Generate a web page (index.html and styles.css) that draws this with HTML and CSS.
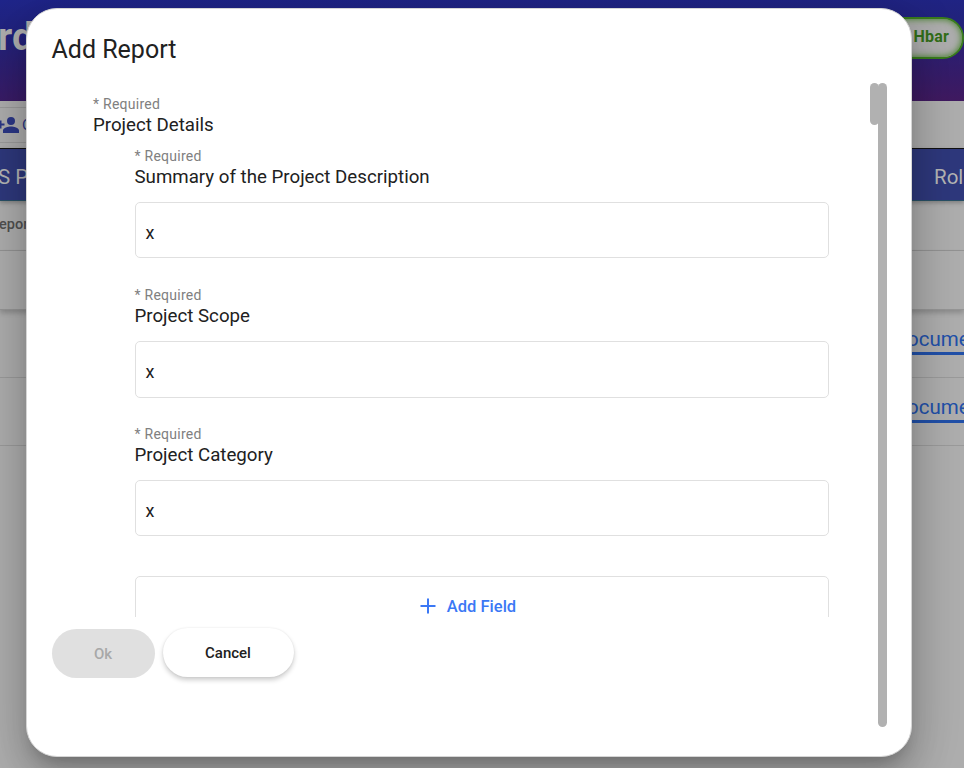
FILE: index.html
```html
<!DOCTYPE html>
<html lang="en">
<head>
<meta charset="utf-8">
<title>Add Report</title>
<link rel="stylesheet" href="styles.css">
</head>
<body>
<div class="page">
  <header class="topbar"><span class="brand">rd</span><span class="balance">Hbar</span></header>
  <div class="toolbar">
    <div class="tool">
      <svg class="person" width="26" height="24" viewBox="0 0 26 24"><path d="M16 12a4 4 0 1 0 0-8 4 4 0 0 0 0 8zM6.500 10.500V7.500H4.500v3h-3v2h3v3h2v-3h3v-2zM16 13.500c-2.700 0-8 1.300-8 4V20h16v-2.500c0-2.700-5.300-4-8-4z"/></svg>
      <span>O</span>
    </div>
  </div>
  <div class="row head"><span>S P</span><span class="end">Rol</span></div>
  <div class="row sub"><span>epor</span></div>
  <div class="row filter"></div>
  <div class="row link"><span></span><a class="doc">ocume</a></div>
  <div class="row link last"><span></span><a class="doc">ocume</a></div>
</div>
<div class="dialog">
  <h1>Add Report</h1>
  <div class="body">
    <div class="scroll">
      <div class="req">* Required</div>
      <div class="label">Project Details</div>
      <div class="group">
        <div class="field"><div class="req">* Required</div><div class="label">Summary of the Project Description</div><div class="input">x</div></div>
        <div class="field"><div class="req">* Required</div><div class="label">Project Scope</div><div class="input tall">x</div></div>
        <div class="field"><div class="req">* Required</div><div class="label">Project Category</div><div class="input">x</div></div>
        <div class="add"><svg width="16" height="16" viewBox="0 0 16 16"><path d="M8 .5v15M.5 8h15"/></svg><span>Add Field</span></div>
      </div>
    </div>
    <div class="thumb"></div>
  </div>
  <div class="actions"><button class="ok" disabled>Ok</button><button class="cancel">Cancel</button></div>
  <div class="bar"></div>
</div>
</body>
</html>
```
FILE: styles.css
```css
* { box-sizing: border-box; }
body { margin: 0; width: 964px; height: 768px; overflow: hidden; font-family: Roboto, sans-serif; color: #212121; position: relative; }
.page { height: 768px; background: #adadad; overflow: hidden; }
.topbar { height: 101px; display: flex; justify-content: space-between; align-items: flex-start; background: linear-gradient(179deg, #1f258a 0%, #21227c 30%, #371c68 80%, #401a60 100%); }
.brand { font-size: 39px; line-height: 46px; font-weight: 700; color: #adadad; margin: 14px 0 0 -2px; }
.balance { width: 120px; height: 42px; margin-top: 17px; border: 2px solid #397c1c; border-radius: 21px; background: #adadad; box-shadow: inset 0 0 7px #397c1c; color: #326e19; font-size: 16px; line-height: 36px; font-weight: 700; text-align: right; padding-right: 13px; letter-spacing: .2px; }
.toolbar { height: 47px; padding-top: 6px; }
.tool { width: 120px; height: 36px; border: 1px solid #9a9a9a; border-left: 0; display: flex; align-items: center; color: #2b3786; font-size: 15px; }
.person { fill: #2b3786; margin-left: -5px; flex: none; }
.tool span { margin-left: 1px; }
.row { display: grid; grid-template-columns: 934px 1fr; border-bottom: 1px solid #959595; white-space: nowrap; }
.head { height: 53px; border-top: 1px solid #111; border-bottom: 1px solid #285065; background: #2e387c; color: #b4b4b4; font-size: 20.500px; line-height: 56px; box-shadow: 0 2px 4px rgba(0,0,0,.25); }
.head span:first-child { margin-left: -2px; }
.sub { height: 50px; font-size: 14.500px; font-weight: 500; line-height: 48px; color: #505050; }
.sub span { margin-left: -1px; }
.filter { height: 59px; box-shadow: 0 3px 5px rgba(0,0,0,.2); }
.link { height: 68px; grid-template-columns: 907px 1fr; padding-top: 17px; border-bottom-color: #9a9a9a; }
.last { height: 68px; }
.doc { font-size: 20.500px; line-height: 25px; height: 28px; color: #2150a8; border-bottom: 3px solid #2150a8; }
.dialog { position: absolute; left: 26px; top: 8px; width: 886px; height: 749px; border-radius: 31px; background: #fff; border: 1px solid #d5d5d5; padding: 24px 0 0 24.500px; box-shadow: 0 11px 15px -7px rgba(0,0,0,.2), 0 24px 38px 3px rgba(0,0,0,.14), 0 9px 46px 8px rgba(0,0,0,.12); }
h1 { margin: 0 0 16px; font-size: 25px; line-height: 34px; font-weight: 400; }
.body { height: 534px; display: flex; justify-content: space-between; width: 827.500px; }
.scroll { height: 534px; overflow: hidden; padding: 12px 0 0 41.500px; width: 777px; }
.req { font-size: 14px; line-height: 18px; color: #808080; letter-spacing: .25px; }
.label { font-size: 18.700px; line-height: 24px; margin-bottom: 10px; }
.group { padding-left: 41.500px; }
.field { height: 139px; }
.field .label { margin-bottom: 13px; }
.input { height: 56px; border: 1px solid #e0e0e0; border-radius: 5px; padding: 10px; font-size: 18px; line-height: 40px; }
.tall { height: 57px; }
.add { height: 60px; margin-top: 12px; border: 1px solid #e0e0e0; border-radius: 5px; display: flex; justify-content: center; align-items: center; gap: 11px; color: #3b78f5; font-size: 16.500px; font-weight: 500; padding-right: 27px; }
.add svg { fill: none; stroke: #3b78f5; stroke-width: 2; }
.thumb { width: 9px; height: 42px; border-radius: 5px; background: #b1b1b1; }
.actions { display: flex; gap: 8px; margin-top: 11px; }
button { border: 0; height: 49px; border-radius: 25px; font: 500 15px Roboto, sans-serif; }
.ok { width: 103px; margin-top: 1px; background: #e0e0e0; color: #a8a8a8; }
.cancel { width: 131px; background: #fff; color: #212121; box-shadow: 0 3px 5px rgba(0,0,0,.2), 0 0 2px rgba(0,0,0,.08); }
.bar { position: absolute; left: 851px; top: 74px; width: 9px; height: 644px; border-radius: 5px; background: #b1b1b1; }
```
